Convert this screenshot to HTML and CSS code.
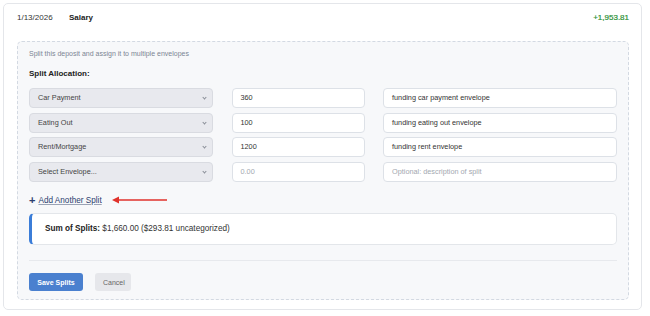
FILE: index.html
```html
<!DOCTYPE html>
<html>
<head>
  <title>Split Deposit</title>
  <meta name="viewport" content="width=device-width, initial-scale=1">
  <link rel="stylesheet" href="styles.css">
</head>
<body>

  <div class="card">

    <div class="txn_header">
      <span class="date">1/13/2026</span>
      <span class="payee">Salary</span>
      <span class="amount">+1,953.81</span>
    </div>

    <div class="split_panel">
      <p class="hint">Split this deposit and assign it to multiple envelopes</p>
      <p class="title">Split Allocation:</p>

      <div class="split_rows">
        <div class="select">Car Payment<span class="chevron"></span></div>
        <div class="field">360</div>
        <div class="field">funding car payment envelope</div>

        <div class="select">Eating Out<span class="chevron"></span></div>
        <div class="field">100</div>
        <div class="field">funding eating out envelope</div>

        <div class="select">Rent/Mortgage<span class="chevron"></span></div>
        <div class="field">1200</div>
        <div class="field">funding rent envelope</div>

        <div class="select">Select Envelope...<span class="chevron"></span></div>
        <div class="field placeholder">0.00</div>
        <div class="field placeholder">Optional: description of split</div>
      </div>

      <div class="add_row">
        <a class="add_link" href="#"><span class="plus">+</span><span class="add_text">Add Another Split</span></a>
        <svg class="arrow" width="58" height="8" viewBox="0 0 58 8">
          <line x1="5" y1="4" x2="55" y2="4" stroke="#e0322b" stroke-width="1.5"/>
          <polygon points="0,4 7,0.5 7,7.5" fill="#e0322b"/>
        </svg>
      </div>

      <div class="sum_box">
        <span class="bold">Sum of Splits:</span> $1,660.00 ($293.81 uncategorized)
      </div>

      <div class="divider"></div>

      <div class="actions">
        <button class="btn save">Save Splits</button>
        <button class="btn cancel">Cancel</button>
      </div>
    </div>

  </div>

</body>
</html>
```

FILE: styles.css
```css
body {
  margin: 0;
  background-color: #ffffff;
  font-family: "Liberation Sans", Arial, sans-serif;
  color: #222222;
}

p {
  margin: 0;
}

.bold {
  font-weight: bold;
}

.card {
  margin: 3px 0 0 3px;
  width: 612px;
  padding: 9px 12px 9px 13px;
  border: 1px solid #e4e6ea;
  border-radius: 5px;
}

.txn_header {
  display: flex;
  align-items: center;
  height: 10px;
  font-size: 8px;
  line-height: 10px;
}

.date {
  width: 52px;
  color: #333333;
}

.payee {
  font-weight: bold;
}

.amount {
  margin-left: auto;
  color: #2a9034;
  -webkit-text-stroke: 0.2px #2a9034;
}

.split_panel {
  margin-top: 18px;
  padding: 7px 11px 8px 11px;
  border: 1px dashed #d3d9e2;
  border-radius: 5px;
  background-color: #f7f8fa;
}

.hint {
  font-size: 7px;
  line-height: 10px;
  color: #7c8594;
}

.title {
  margin-top: 10px;
  font-size: 8px;
  line-height: 10px;
  font-weight: bold;
  color: #222222;
}

.split_rows {
  margin-top: 9px;
  display: grid;
  grid-template-columns: 184px 133px 234px;
  column-gap: 18.5px;
  row-gap: 4.5px;
}

.select,
.field {
  box-sizing: border-box;
  height: 20px;
  padding: 0 8px;
  font-size: 7.3px;
  line-height: 18px;
  border-radius: 4px;
  white-space: nowrap;
}

.select {
  position: relative;
  background-color: #e8e9ee;
  border: 1px solid #d9dbe1;
  color: #444444;
}

.chevron {
  position: absolute;
  right: 6px;
  top: 7px;
  width: 2px;
  height: 2px;
  border-right: 1px solid #8a8f99;
  border-bottom: 1px solid #8a8f99;
  transform: rotate(45deg);
}

.field {
  background-color: #ffffff;
  border: 1px solid #dde1e7;
  color: #333333;
}

.field.placeholder {
  color: #a3a8b0;
}

.add_row {
  margin-top: 12.5px;
  display: flex;
  align-items: center;
  height: 12px;
}

.add_link {
  display: flex;
  align-items: center;
  color: #2c3f6e;
  font-size: 8.2px;
  text-decoration: none;
}

.plus {
  font-size: 11px;
  font-weight: bold;
  line-height: 10px;
  margin-right: 3px;
}

.add_text {
  text-decoration: underline;
  text-decoration-color: #9aa3b5;
}

.arrow {
  margin-left: 10px;
}

.sum_box {
  margin-top: 7px;
  box-sizing: border-box;
  height: 32px;
  padding-left: 13px;
  font-size: 8.2px;
  line-height: 30px;
  color: #333333;
  background-color: #ffffff;
  border: 1px solid #e3e6ea;
  border-left: 3px solid #3b7dd8;
  border-radius: 5px;
}

.sum_box .bold {
  color: #222222;
}

.divider {
  margin-top: 15px;
  height: 1px;
  background-color: #e7e9ed;
}

.actions {
  margin-top: 12px;
  display: flex;
  gap: 12px;
}

.btn {
  height: 18px;
  padding: 0 8px;
  border: none;
  border-radius: 3px;
  font-family: "Liberation Sans", Arial, sans-serif;
  font-size: 7px;
}

.save {
  width: 54px;
  background-color: #4a80cf;
  color: #ffffff;
  font-weight: bold;
}

.cancel {
  width: 36px;
  background-color: #e6e7eb;
  color: #666666;
}
```
